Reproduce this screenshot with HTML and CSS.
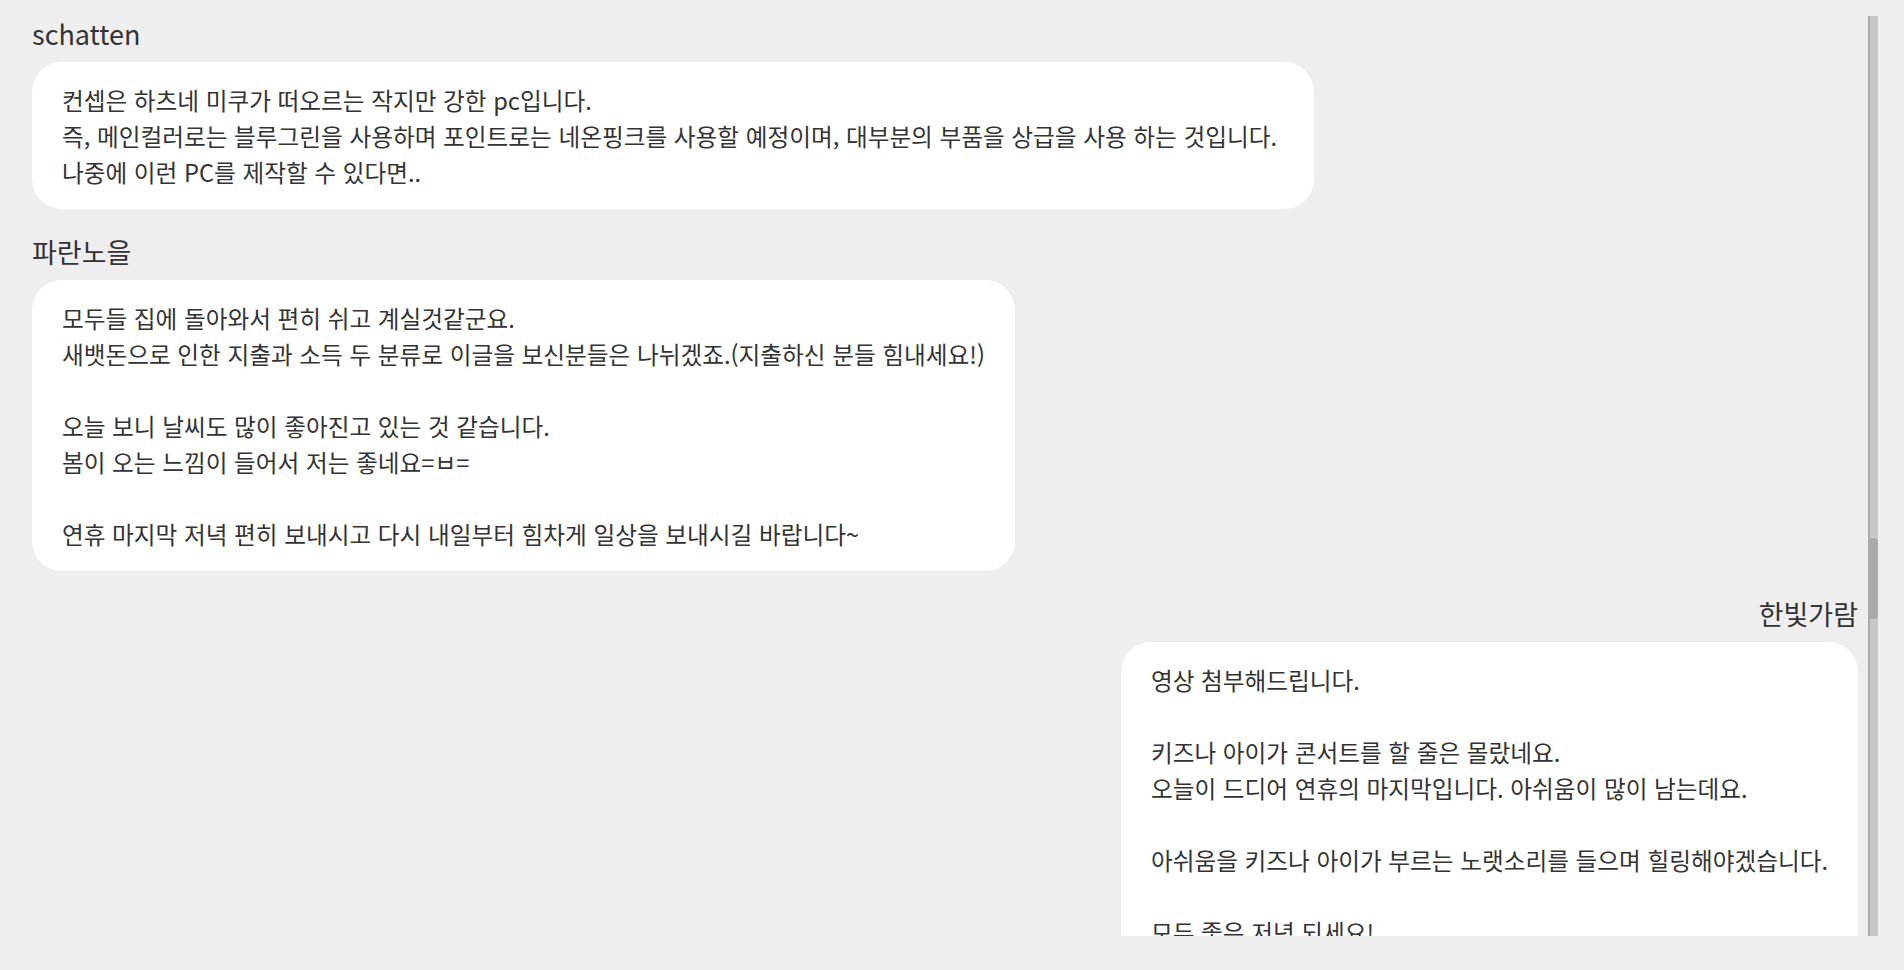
FILE: index.html
```html
<!DOCTYPE html>
<html lang="ko">
<head>
<meta charset="utf-8">
<title>Chat</title>
<link rel="stylesheet" href="styles.css">
</head>
<body>
<div class="app">
  <div class="chat">
    <div class="msg">
      <div class="name">schatten</div>
      <div class="bubble">컨셉은 하츠네 미쿠가 떠오르는 작지만 강한 pc입니다.<br>즉, 메인컬러로는 블루그린을 사용하며 포인트로는 네온핑크를 사용할 예정이며, 대부분의 부품을 상급을 사용 하는 것입니다.&nbsp;<br>나중에 이런 PC를 제작할 수 있다면..</div>
    </div>
    <div class="msg">
      <div class="name">파란노을</div>
      <div class="bubble">모두들 집에 돌아와서 편히 쉬고 계실것같군요.<br>새뱃돈으로 인한 지출과 소득 두 분류로 이글을 보신분들은 나뉘겠죠.(지출하신 분들 힘내세요!)<br><br>오늘 보니 날씨도 많이 좋아진고 있는 것 같습니다.<br>봄이 오는 느낌이 들어서 저는 좋네요=ㅂ=<br><br>연휴 마지막 저녁 편히 보내시고 다시 내일부터 힘차게 일상을 보내시길 바랍니다~</div>
    </div>
    <div class="msg mine">
      <div class="name">한빛가람</div>
      <div class="bubble">영상 첨부해드립니다.<br><br>키즈나 아이가 콘서트를 할 줄은 몰랐네요.<br>오늘이 드디어 연휴의 마지막입니다. 아쉬움이 많이 남는데요.<br><br>아쉬움을 키즈나 아이가 부르는 노랫소리를 들으며 힐링해야겠습니다.<br><br>모두 좋은 저녁 되세요!<br><br></div>
    </div>
  </div>
  <div class="scrollbar"><div class="thumb"></div></div>
</div>
</body>
</html>
```

FILE: styles.css
```css
html, body {
  margin: 0;
  padding: 0;
  background: #eeeeee;
}
body {
  font-family: "Noto Sans CJK KR", "Noto Sans", sans-serif;
  color: #333333;
}
.app {
  display: flex;
  align-items: flex-start;
  height: 970px;
  padding-top: 12px;
  box-sizing: border-box;
}
.chat {
  flex: 1;
  height: 924px;
  box-sizing: border-box;
  overflow: hidden;
  padding-top: 4px;
  padding-left: 32px;
  margin-right: 10px;
  display: flex;
  flex-direction: column;
  gap: 25px;
}
.msg {
  display: flex;
  flex-direction: column;
  align-items: flex-start;
  flex-shrink: 0;
}
.msg.mine {
  align-items: flex-end;
}
.name {
  font-size: 27px;
  line-height: 36px;
  margin-bottom: 10px;
  color: #333333;
}
.bubble {
  background: #ffffff;
  border-radius: 30px;
  padding: 19.5px 30px;
  font-size: 23.65px;
  line-height: 36px;
  color: #333333;
}
.scrollbar {
  width: 10px;
  height: 920px;
  margin-top: 4px;
  margin-right: 26px;
  background: #c8c8c8;
  border-left: 2px solid #aaaaaa;
  box-sizing: border-box;
  flex-shrink: 0;
}
.thumb {
  margin-top: 522px;
  height: 81px;
  background: #aaaaaa;
  border-radius: 0 4px 4px 0;
}
```
